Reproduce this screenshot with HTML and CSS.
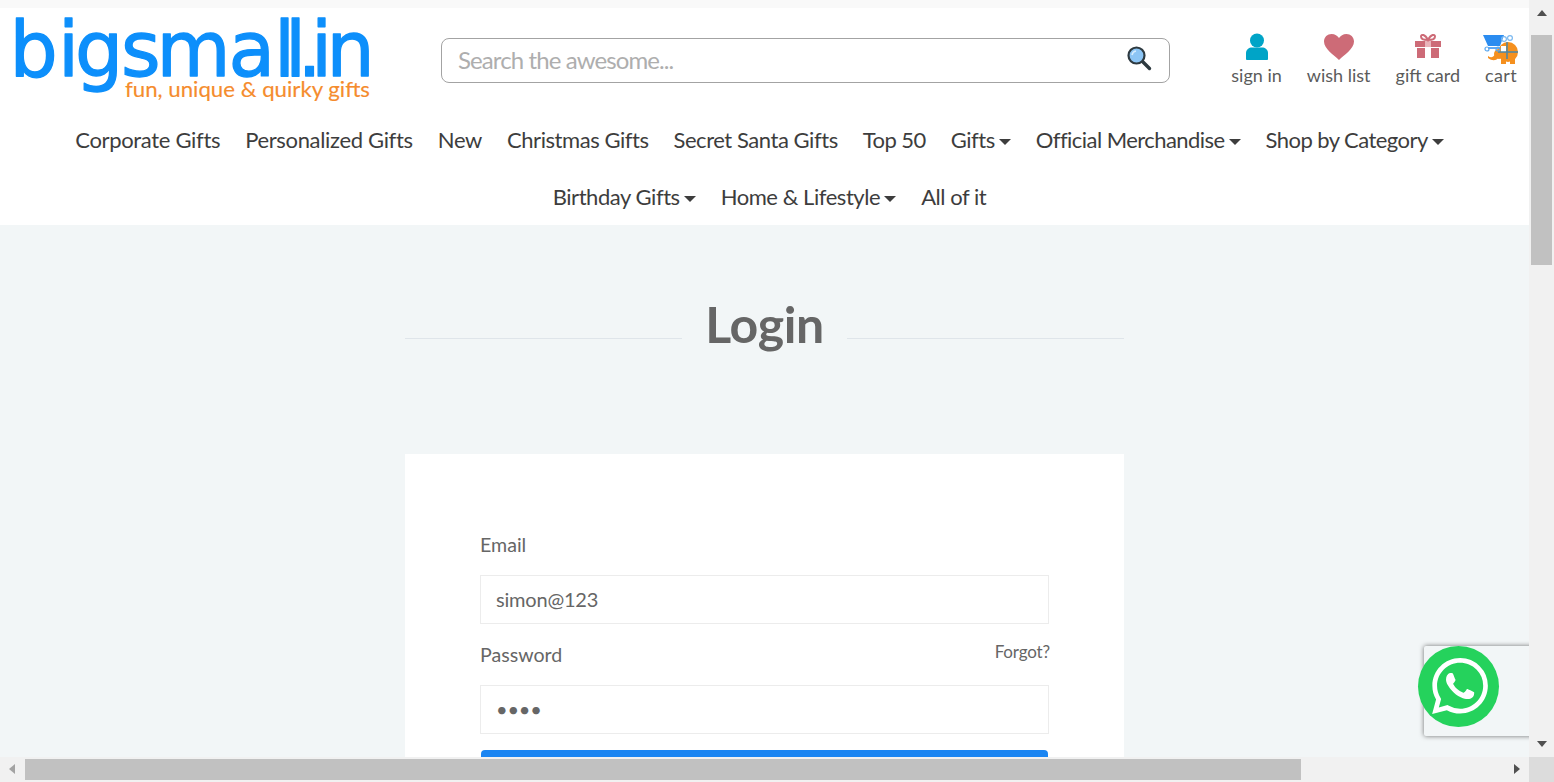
FILE: index.html
```html
<!DOCTYPE html>
<html lang="en">
<head>
<meta charset="utf-8">
<title>Login - bigsmall.in</title>
<link rel="stylesheet" href="styles.css">
</head>
<body>
<div class="window">
  <div class="viewport">
    <header class="site-header">
      <div class="top-row">
        <a class="logo" href="#" aria-label="bigsmall.in">
          <svg class="logo-svg" width="360" height="92" viewBox="0 0 360 92">
            <text class="logo-main" x="-3.500 45 62 108 143.500 215.500 261 272 284.500 298 313.500" y="60">bigsmall.in</text>
            <text class="logo-tag" x="112" y="81" textLength="245" lengthAdjust="spacingAndGlyphs">fun, unique &amp; quirky gifts</text>
          </svg>
        </a>
        <form class="search">
          <input class="search-input" type="text" placeholder="Search the awesome...">
          <svg class="search-icon" width="26" height="26" viewBox="0 0 26 26">
            <line x1="16" y1="16" x2="23.500" y2="23.500" stroke="#2e3a40" stroke-width="3.400" stroke-linecap="round"/>
            <circle cx="10.500" cy="10.500" r="8" fill="#8cc5f5" stroke="#2e3a40" stroke-width="2.200"/>
            <path d="M6 10a5 5 0 0 1 4-4" fill="none" stroke="#d5ecff" stroke-width="1.600"/>
          </svg>
        </form>
        <nav class="account">
          <a class="account-item" href="#">
            <svg class="account-icon" width="24" height="28" viewBox="0 0 24 28"><circle cx="12" cy="7.500" r="7" fill="#00a4c7"/><path d="M1 26v-6c0-3.500 3-5.500 6-5.500h10c3 0 6 2 6 5.500v6c0 .5-.5 1-1 1H2c-.5 0-1-.5-1-1z" fill="#00a4c7"/></svg>
            <span>sign in</span>
          </a>
          <a class="account-item" href="#">
            <svg class="account-icon" width="32" height="28" viewBox="0 0 32 28"><path d="M16 27C11 22 1 16 1 8.500 1 4 4.500 1 8.500 1 12 1 14.500 2.800 16 5c1.500-2.200 4-4 7.500-4C27.500 1 31 4 31 8.500 31 16 21 22 16 27z" fill="#cd6b77"/></svg>
            <span>wish list</span>
          </a>
          <a class="account-item" href="#">
            <svg class="account-icon" width="28" height="28" viewBox="0 0 28 28"><path d="M1 8h26v6H1zM3 15h22v10H3z" fill="#cd6b77"/><rect x="11" y="15" width="6" height="10" fill="#fff"/><rect x="11" y="8" width="6" height="6" fill="#e9b4ba"/><path d="M14 7C10 7 7 6 7 3.500S11 1 14 7c3-6 7-6 7-3.500S18 7 14 7z" fill="none" stroke="#cd6b77" stroke-width="2"/></svg>
            <span>gift card</span>
          </a>
          <a class="account-item cart-item" href="#">
            <svg class="account-icon cart-icon" width="36" height="32" viewBox="0 0 36 32">
              <circle cx="25" cy="19" r="10" fill="#f5901e"/>
              <circle cx="16" cy="21" r="5" fill="#f5901e"/>
              <path d="M13 20C10 25 8 25 5 23v2c4 3 8 3 10 0z" fill="#f5901e"/>
              <path d="M18 24h5v7h-5zM27 24h5v7h-5z" fill="#f5901e"/>
              <rect x="18" y="13" width="5" height="6" fill="#fff"/>
              <path d="M24 9v17M15 19h20" stroke="#4a86a8" stroke-width="1.500"/>
              <path d="M0 2h21l-4 11H5z" fill="#2b8cf0"/>
              <path d="M5 15h12" stroke="#2b8cf0" stroke-width="1.500"/>
              <circle cx="4" cy="16" r="2" fill="none" stroke="#5aa8f0" stroke-width="1.200"/>
              <circle cx="15" cy="16" r="2" fill="none" stroke="#5aa8f0" stroke-width="1.200"/>
              <circle cx="21" cy="6" r="2.400" fill="none" stroke="#7ab8f0" stroke-width="1.200"/>
              <circle cx="27" cy="5" r="2.400" fill="none" stroke="#7ab8f0" stroke-width="1.200"/>
            </svg>
            <span class="cart-label">cart</span>
          </a>
        </nav>
      </div>
      <nav class="main-nav">
        <div class="nav-row nav-row-first">
          <a class="nav-link nav-wide" href="#">Corporate Gifts</a>
          <a class="nav-link nav-wide" href="#">Personalized Gifts</a>
          <a class="nav-link nav-wide" href="#">New</a>
          <a class="nav-link" href="#">Christmas Gifts</a>
          <a class="nav-link" href="#">Secret Santa Gifts</a>
          <a class="nav-link nav-tight" href="#">Top 50</a>
          <a class="nav-link caret" href="#">Gifts</a>
          <a class="nav-link nav-tight caret" href="#">Official Merchandise</a>
          <a class="nav-link nav-tight caret" href="#">Shop by Category</a>
        </div>
        <div class="nav-row nav-row-second">
          <a class="nav-link caret" href="#">Birthday Gifts</a>
          <a class="nav-link caret" href="#">Home &amp; Lifestyle</a>
          <a class="nav-link" href="#">All of it</a>
        </div>
      </nav>
    </header>
    <main class="content">
      <div class="title-row">
        <h1 class="title">Login</h1>
      </div>
      <section class="card">
        <form class="login-form">
          <label class="field-label" for="email">Email</label>
          <input class="field" id="email" type="text" value="simon@123">
          <div class="password-row">
            <label class="field-label" for="password">Password</label>
            <a class="forgot" href="#">Forgot?</a>
          </div>
          <input class="field" id="password" type="password" value="1234">
          <button class="submit" type="button">Login</button>
        </form>
      </section>
    </main>
    <div class="recaptcha"></div>
    <a class="whatsapp" href="#" aria-label="WhatsApp">
      <svg width="56" height="56" viewBox="0 0 24 24"><path fill="#fff" d="M17.472 14.382c-.297-.149-1.758-.867-2.03-.967-.273-.099-.471-.148-.67.15-.197.297-.767.966-.94 1.164-.173.199-.347.223-.644.075-.297-.15-1.255-.463-2.39-1.475-.883-.788-1.48-1.761-1.653-2.059-.173-.297-.018-.458.13-.606.134-.133.298-.347.446-.52.149-.174.198-.298.298-.497.099-.198.05-.371-.025-.52-.075-.149-.669-1.612-.916-2.207-.242-.579-.487-.5-.669-.51-.173-.008-.371-.01-.57-.01-.198 0-.52.074-.792.372-.272.297-1.04 1.016-1.04 2.479 0 1.462 1.065 2.875 1.213 3.074.149.198 2.096 3.2 5.077 4.487.709.306 1.262.489 1.694.625.712.227 1.36.195 1.871.118.571-.085 1.758-.719 2.006-1.413.248-.694.248-1.289.173-1.413-.074-.124-.272-.198-.57-.347m-5.421 7.403h-.004a9.87 9.87 0 01-5.031-1.378l-.361-.214-3.741.982.998-3.648-.235-.374a9.86 9.86 0 01-1.51-5.26c.001-5.45 4.436-9.884 9.888-9.884 2.64 0 5.122 1.03 6.988 2.898a9.825 9.825 0 012.893 6.994c-.003 5.45-4.437 9.884-9.885 9.884m8.413-18.297A11.815 11.815 0 0012.05 0C5.495 0 .16 5.335.157 11.892c0 2.096.547 4.142 1.588 5.945L.057 24l6.305-1.654a11.882 11.882 0 005.683 1.448h.005c6.554 0 11.89-5.335 11.893-11.893a11.821 11.821 0 00-3.48-8.413z"/></svg>
    </a>
  </div>
  <div class="vscroll">
    <span class="arrow arrow-up"></span>
    <span class="vthumb"></span>
    <span class="arrow arrow-down"></span>
  </div>
  <div class="hscroll">
    <span class="arrow arrow-left"></span>
    <span class="hthumb"></span>
    <span class="arrow arrow-right"></span>
  </div>
  <div class="corner"></div>
</div>
</body>
</html>
```
FILE: styles.css
```css
* { box-sizing: border-box; }
html, body { margin: 0; padding: 0; height: 100%; overflow: hidden; }
body { font-family: Lato, "Noto Sans", sans-serif; color: #555; background: #f2f6f7; }
a { color: inherit; text-decoration: none; }

.window {
  display: grid;
  grid-template-columns: 1529px 25px;
  grid-template-rows: 757px 25px;
  width: 1554px;
  height: 782px;
}
.viewport {
  position: relative;
  overflow: hidden;
  padding-top: 8px;
  background: #f9f9f9;
  display: flex;
  flex-direction: column;
}

/* header */
.site-header { background: #fff; flex: none; }
.top-row {
  height: 103px;
  display: flex;
  align-items: flex-start;
  padding: 0 12px 0 13px;
}
.logo { display: block; width: 360px; height: 92px; flex: none; margin-top: 8px; }
.logo-svg { display: block; overflow: visible; }
.logo-main {
  font-family: "DejaVu Sans", sans-serif;
  font-size: 76px;
  fill: #0d8ffb;
  stroke: #0d8ffb;
  stroke-width: 1.300px;
  stroke-linejoin: round;
}
.logo-tag {
  font-family: Lato, sans-serif;
  font-size: 21px;
  fill: #f58c2d;
  stroke: #f58c2d;
  stroke-width: .15px;
}
.search {
  position: relative;
  width: 729px;
  height: 45px;
  margin: 30px 0 0 68px;
  flex: none;
}
.search-input {
  display: block;
  width: 100%;
  height: 100%;
  border: 1px solid #a3a3a3;
  border-radius: 8px;
  padding: 0 50px 2px 16px;
  font: 24px Lato, sans-serif;
  letter-spacing: -.9px;
  color: #555;
  background: #fff;
  outline: none;
}
.search-input::placeholder { color: #aeaeae; opacity: 1; }
.search-icon { position: absolute; right: 18px; top: 7px; }
.account {
  display: flex;
  gap: 25px;
  margin-left: auto;
  padding-top: 25px;
}
.account-item {
  display: flex;
  flex-direction: column;
  align-items: center;
  font-size: 18px;
  line-height: 24px;
  color: #5b5b5b;
  white-space: nowrap;
}
.account-icon { display: block; height: 28px; margin-bottom: 2px; }
.cart-item { width: 32px; }
.cart-label { letter-spacing: .4px; }
.cart-icon { height: 32px; width: 36px; margin: 0 -2px -2px; flex: none; }

.main-nav { display: flex; flex-direction: column; }
.nav-row { display: flex; justify-content: center; column-gap: 25px; }
.nav-row-first { padding-right: 10px; }
.nav-row-second { padding-left: 10px; }
.nav-link {
  font-size: 22px;
  letter-spacing: -.45px;
  line-height: 57px;
  color: #3d3d3d;
  white-space: nowrap;
}
.nav-wide { letter-spacing: -.33px; }
.nav-tight { letter-spacing: -.55px; }
.caret::after {
  content: "";
  display: inline-block;
  margin-left: 4px;
  vertical-align: 3px;
  border-style: solid;
  border-width: 6px 6px 0;
  border-color: #3d3d3d transparent transparent;
}

/* login */
.content { flex: 1; background: #f2f6f7; min-height: 0; }
.title-row {
  width: 719px;
  margin: 0 auto;
  padding-top: 69px;
  display: flex;
  align-items: center;
  justify-content: center;
}
.title-row::before, .title-row::after {
  content: "";
  flex: 1;
  height: 1px;
  background: #dfe5ea;
  margin-top: 28px;
}
.title {
  margin: 0;
  padding: 0 23px;
  font-size: 50px;
  letter-spacing: -.4px;
  line-height: 60px;
  font-weight: 700;
  color: #666;
}
.card {
  width: 719px;
  margin: 100px auto 0;
  padding: 75px 75px 60px;
  background: #fff;
}
.login-form { display: flex; flex-direction: column; }
.field-label { font-size: 19.6px; line-height: 32px; color: #666; display: block; }
.field {
  display: block;
  width: 100%;
  height: 49px;
  margin: 14px 0 15px;
  border: 1px solid #ececec;
  padding: 0 15px 2px;
  font: 20px Lato, sans-serif;
  letter-spacing: -.2px;
  color: #666;
  background: #fff;
  outline: none;
}
.password-row { display: flex; justify-content: space-between; align-items: flex-start; height: 32px; }
.forgot { font-size: 17px; letter-spacing: -.15px; line-height: 24px; color: #666; margin: 1px -1px 0 0; }
.field + .password-row + .field { margin-top: 14px; }
.submit {
  height: 50px;
  margin: 1px 1px 0;
  border: 0;
  border-radius: 4px;
  background: #1a85f2;
  color: #fff;
  font: 700 20px Lato, sans-serif;
}

/* floating */
.recaptcha {
  position: absolute;
  left: 1424px;
  top: 646px;
  width: 256px;
  height: 90px;
  border-radius: 2px;
  background: #f2f6f7;
  box-shadow: 0 0 5px rgba(0, 0, 0, .55);
}
.whatsapp {
  position: absolute;
  left: 1418px;
  top: 646px;
  width: 81px;
  height: 81px;
  border-radius: 50%;
  background: #25d25c;
  padding: 0 0 2px 3px;
  display: flex;
  align-items: center;
  justify-content: center;
}

/* scrollbars */
.vscroll {
  background: #f1f1f1;
  display: flex;
  flex-direction: column;
  align-items: center;
  justify-content: space-between;
  position: relative;
}
.vthumb {
  position: absolute;
  left: 2px;
  top: 35px;
  width: 21px;
  height: 230px;
  background: #c1c1c1;
}
.hscroll {
  background: #f1f1f1;
  display: flex;
  align-items: center;
  position: relative;
}
.hthumb {
  width: 1276px;
  height: 21px;
  margin-left: 25px;
  background: #c1c1c1;
}
.corner { background: #dcdcdc; }
.arrow { width: 0; height: 0; border-style: solid; display: block; flex: none; }
.arrow-up { margin-top: 10px; border-width: 0 5.5px 6px; border-color: transparent transparent #505050; }
.arrow-down { margin-bottom: 10px; border-width: 6px 5.5px 0; border-color: #505050 transparent transparent; }
.arrow-left { position: absolute; left: 9px; top: 7px; border-width: 5.5px 6px 5.5px 0; border-color: transparent #a3a3a3 transparent transparent; }
.arrow-right { position: absolute; left: 1514px; top: 7px; border-width: 5.5px 0 5.5px 6px; border-color: transparent transparent transparent #505050; }
```
